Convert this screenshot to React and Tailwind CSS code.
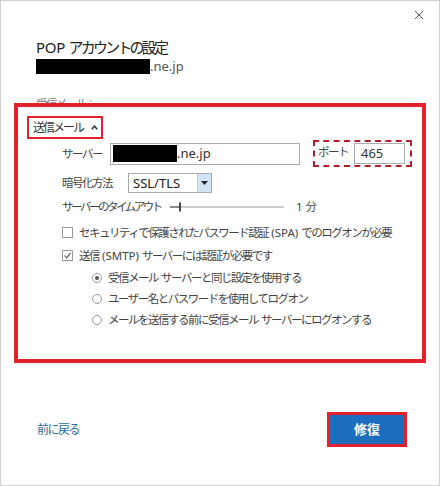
import React from 'react';

const jp = "font-['Noto_Sans','Noto_Sans_CJK_JP',sans-serif]";

// latin runs keep normal spacing inside the condensed japanese text
const L = ({ children }) => <span className="tracking-normal">{children}</span>;

const Check = ({ checked, children }) => (
  <div className="flex items-center h-[23px] whitespace-nowrap">
    <div className="w-[11px] h-[11px] shrink-0 border border-[#9a9a9a] bg-white flex items-center justify-center">
      {checked && (
        <svg width="9" height="9" viewBox="0 0 9 9">
          <path d="M1.5 4.5 L3.6 6.8 L7.6 1.8" stroke="#555" strokeWidth="1.1" fill="none" />
        </svg>
      )}
    </div>
    <span className="ml-[6px]">{children}</span>
  </div>
);

const Radio = ({ selected, children }) => (
  <div className="flex items-center h-[21px] pl-[30px] whitespace-nowrap">
    <div className="w-[10px] h-[10px] shrink-0 rounded-full border border-[#9a9a9a] bg-white flex items-center justify-center">
      {selected && <div className="w-[4px] h-[4px] rounded-full bg-[#555]" />}
    </div>
    <span className="ml-[6px]">{children}</span>
  </div>
);

export default function App() {
  return (
    <div className={`relative w-[440px] h-[486px] bg-white border border-[#cfcfcf] text-[#444] ${jp}`}>
      {/* close */}
      <svg className="absolute top-[10px] right-[16px]" width="8" height="8" viewBox="0 0 8 8">
        <path d="M0 0 L8 8 M8 0 L0 8" stroke="#555" strokeWidth="1" />
      </svg>

      {/* header */}
      <div className="pl-[35px] pt-[35px]">
        <div className="text-[15px] leading-[22px] tracking-[-2.8px] text-[#222] whitespace-nowrap">
          <span className="tracking-[-0.3px]">POP </span>アカウントの設定
        </div>
        <div className="flex items-end h-[15px] mt-[1px]">
          <div className="w-[114px] h-[15px] bg-black" />
          <span className="text-[13px] leading-[15px] text-[#555]">.ne.jp</span>
        </div>
      </div>

      {/* partially hidden incoming mail */}
      <div className="pl-[35px] mt-[22px] h-[7px] overflow-hidden">
        <div className="text-[11.5px] leading-[16px] tracking-[-1.5px] text-[#777] whitespace-nowrap">受信メール<L> ˄</L></div>
      </div>

      {/* outgoing section (annotated) */}
      <div className="mx-[13px] h-[260px] border-4 border-[#e3202b] text-[11.5px] tracking-[-1.5px]">
        <div className="ml-[9px] mt-[9px] w-[76px] h-[23px] border-2 border-[#e3202b] flex items-center pl-[4px] whitespace-nowrap">
          <span className="text-[12px] tracking-[-2px] text-[#333]">送信メール</span>
          <svg className="ml-[8px]" width="7" height="5" viewBox="0 0 7 5">
            <path d="M0.8 4.2 L3.5 1.2 L6.2 4.2" stroke="#333" strokeWidth="1.5" fill="none" />
          </svg>
        </div>

        <div className="pl-[44px] pr-[14px] whitespace-nowrap">
          {/* server */}
          <div className="flex items-center h-[27px] mt-[1px]">
            <span className="w-[48px] shrink-0">サーバー</span>
            <div className="w-[190px] shrink-0 h-[22px] border border-[#ababab] flex items-center pl-[2px]">
              <div className="w-[64px] h-[17px] bg-black" />
              <span className="text-[13px] tracking-normal text-[#333]">.ne.jp</span>
            </div>
            <div className="ml-[13px] w-[99px] shrink-0 h-[27px] border-2 border-dashed border-[#b41e2a] flex items-center pl-[3px]">
              <span className="w-[36px] shrink-0 self-start mt-[1px]">ポート</span>
              <div className="w-[51px] h-[21px] border border-[#ababab] flex items-center pl-[6px] text-[13px] tracking-normal text-[#333]">465</div>
            </div>
          </div>

          {/* encryption */}
          <div className="flex items-center h-[20px] mt-[6px]">
            <span className="w-[66px] shrink-0">暗号化方法</span>
            <div className="w-[84px] h-[20px] border border-[#ababab] flex">
              <span className="flex-1 text-[13px] leading-[18px] pl-[4px] tracking-normal text-[#222] font-['Noto_Sans',sans-serif]">SSL/TLS</span>
              <div className="w-[14px] h-full bg-[#cfe4f6] border-l border-[#b9cfe2] flex items-center justify-center">
                <svg width="7" height="4" viewBox="0 0 7 4"><path d="M0 0 L7 0 L3.5 4 Z" fill="#222" /></svg>
              </div>
            </div>
          </div>

          {/* timeout */}
          <div className="flex items-center h-[16px] mt-[6px]">
            <span className="w-[108px] shrink-0 tracking-[-2.5px]">サーバーのタイムアウト</span>
            <svg width="114" height="10" viewBox="0 0 114 10">
              <line x1="0" y1="5" x2="114" y2="5" stroke="#9a9a9a" strokeWidth="1" />
              <line x1="0" y1="5" x2="10" y2="5" stroke="#444" strokeWidth="1" />
              <rect x="9" y="0.5" width="2" height="9" fill="#444" />
            </svg>
            <span className="ml-[12px] tracking-normal">1 分</span>
          </div>

          <div className="mt-[6px]">
            <Check>セキュリティで保護されたパスワード認証<L> (SPA) </L>でのログオンが必要</Check>
            <Check checked>送信<L> (SMTP) </L>サーバーには認証が必要です</Check>
            <Radio selected>受信メール<L> </L>サーバーと同じ設定を使用する</Radio>
            <Radio>ユーザー名とパスワードを使用してログオン</Radio>
            <Radio>メールを送信する前に受信メール<L> </L>サーバーにログオンする</Radio>
          </div>
        </div>
      </div>

      {/* footer */}
      <div className="flex items-center justify-between pl-[36px] pr-[32px] mt-[49px]">
        <span className="text-[12px] tracking-[-1.5px] text-[#2a6b9c]">前に戻る</span>
        <div className="w-[80px] h-[35px] border-[3px] border-[#e3202b] bg-[#1c6dbd] flex items-center justify-center">
          <span className="text-[13px] font-bold text-white">修復</span>
        </div>
      </div>
    </div>
  );
}
